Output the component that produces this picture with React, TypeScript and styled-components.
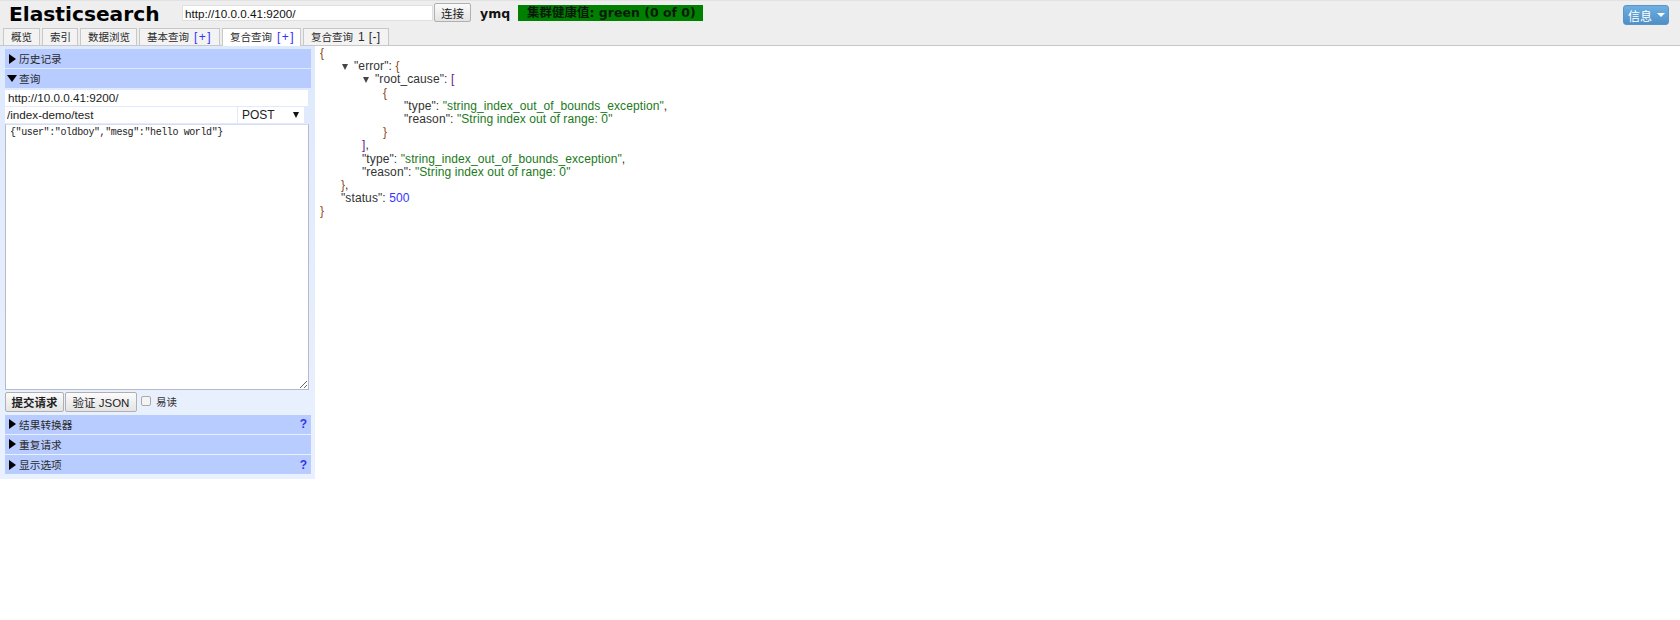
import React from "react";
import styled, { createGlobalStyle } from "styled-components";

const Global = createGlobalStyle`
  html, body { margin: 0; padding: 0; background: #fff; }
  body { font: 12px "Liberation Sans", "Noto Sans CJK SC", Arial, sans-serif; color: #222; width: 1680px; height: 620px; overflow: hidden; position: relative; }
  * { box-sizing: border-box; }
`;

const CJK = `"Liberation Sans", "Noto Sans CJK SC", sans-serif`;

const Watermark = styled.svg`
  position: absolute;
  inset: 0;
  z-index: -1;
`;
const Header = styled.header`
  height: 46px;
  background: #eeeeee;
  border-top: 1px solid #e2e2e2;
  border-bottom: 1px solid #c8c8c8;
  position: relative;
`;
const TopRow = styled.div`
  display: flex;
  align-items: flex-start;
  height: 24px;
  padding: 3px 0 0 9px;
`;
const Logo = styled.div`
  font: bold 20.2px/20px "DejaVu Sans", sans-serif;
  color: #000;
  width: 173px;
`;
const UriInput = styled.input`
  width: 251px;
  height: 16px;
  margin-top: 1px;
  border: 1px solid #e0e0e0;
  padding: 0 2px;
  font: 11.7px ${CJK};
  color: #111;
  background: #fff;
  outline: none;
`;
const Button = styled.button<{ $bold?: boolean }>`
  height: 20px;
  padding: 0;
  border: 1px solid #b0b0b0;
  border-radius: 2px;
  background: linear-gradient(#fbfbfb, #e4e4e4);
  font: ${(p) => (p.$bold ? "bold " : "")}11.5px ${CJK};
  color: #222;
  white-space: nowrap;
`;
const ConnectButton = styled(Button)`
  width: 37px;
  height: 19px;
  margin: -1px 0 0 1px;
`;
const ClusterName = styled.span`
  font: bold 12.5px/19px "DejaVu Sans", sans-serif;
  color: #111;
  margin-left: 9px;
  width: 38px;
`;
const Health = styled.div`
  width: 185px;
  height: 16px;
  margin-top: 1px;
  background: #008000;
  color: #0a1a0a;
  font: bold 12.5px/16px "DejaVu Sans", "Noto Sans CJK SC", sans-serif;
  padding-left: 9px;
  white-space: nowrap;
`;
const InfoButton = styled.button`
  position: absolute;
  top: 4px;
  right: 11px;
  width: 46px;
  height: 20px;
  border: 1px solid #5c93c8;
  border-radius: 3px;
  background: linear-gradient(#6eb0e2, #4f8fc6);
  color: #fff;
  font: 12px ${CJK};
  padding: 0 0 0 1px;
  display: flex;
  align-items: center;
  justify-content: center;
  gap: 5px;
`;
const Caret = styled.i`
  width: 0;
  height: 0;
  border-left: 4px solid transparent;
  border-right: 4px solid transparent;
  border-top: 4px solid #fff;
`;
const Tabs = styled.nav`
  display: flex;
  gap: 2px;
  padding-left: 3px;
  height: 18px;
  margin-top: 3px;
`;
const Tab = styled.div<{ $active?: boolean; $w: number }>`
  width: ${(p) => p.$w}px;
  height: ${(p) => (p.$active ? 18 : 17)}px;
  padding: 1px 0 0 7px;
  background: ${(p) => (p.$active ? "#fff" : "#f3f3f3")};
  border: 1px solid #c8c8c8;
  border-bottom: none;
  font: 10.5px/15px ${CJK};
  color: #2a2a2a;
  white-space: nowrap;
  position: relative;
  z-index: 1;
`;
const Plus = styled.span`
  color: #3333ff;
  font-size: 12px;
  letter-spacing: 1.5px;
  margin-left: 2px;
`;
const Count = styled.span`
  font-size: 12px;
  letter-spacing: 0.4px;
  margin-left: 2px;
`;
const Main = styled.main`
  display: flex;
  align-items: flex-start;
`;
const Side = styled.aside`
  width: 315px;
  height: 433px;
  padding: 3px 4px 0 5px;
  background: linear-gradient(#dfe9fd, #eaf1fe);
`;
const SectionHead = styled.div`
  height: 19px;
  margin-bottom: 1.33px;
  width: 306px;
  background: #b8ccff;
  display: flex;
  align-items: center;
  padding: 0 4px;
  font: 10.7px ${CJK};
  color: #2a2a2a;
`;
const ArrowRight = styled.i`
  width: 0;
  height: 0;
  border-top: 5px solid transparent;
  border-bottom: 5px solid transparent;
  border-left: 7px solid #000;
  margin-right: 3px;
`;
const ArrowDown = styled(ArrowRight)`
  border-left: 5px solid transparent;
  border-right: 5px solid transparent;
  border-top: 7px solid #000;
  border-bottom: none;
  margin: 0 2px 0 -2px;
`;
const Help = styled.span`
  margin-left: auto;
  color: #3333ee;
  font: bold 12px "Liberation Sans", sans-serif;
`;
const FieldInput = styled.input`
  display: block;
  height: 16px;
  width: 303px;
  border: none;
  padding: 0 3px;
  font: 11.7px ${CJK};
  color: #222;
  background: #fff;
  outline: none;
`;
const PathRow = styled.div`
  display: flex;
  margin-top: 1px;
`;
const PathInput = styled(FieldInput)`
  width: 232px;
  padding: 0 2px;
`;
const MethodBox = styled.div`
  width: 66px;
  height: 16px;
  margin-left: 1px;
  background: #fff;
  display: flex;
  align-items: center;
  justify-content: space-between;
  padding: 0 5px 0 4px;
  font: 12px ${CJK};
  color: #222;
`;
const MethodCaret = styled.i`
  width: 0;
  height: 0;
  border-left: 3.5px solid transparent;
  border-right: 3.5px solid transparent;
  border-top: 6px solid #111;
`;
const BodyArea = styled.textarea`
  display: block;
  width: 304px;
  height: 266px;
  margin: 1px 0 2.5px;
  border: 1px solid #b4bccc;
  border-top-color: #d6deee;
  padding: 1px 4px;
  font: 10px/13px "Liberation Mono", monospace;
  letter-spacing: -0.4px;
  color: #222;
  background: #fff;
  outline: none;
`;
const Actions = styled.div`
  display: flex;
  align-items: flex-start;
  height: 20px;
  margin-bottom: 2.5px;
`;
const ValidateButton = styled(Button)`
  margin-left: 1px;
  width: 72px;
`;
const SubmitButton = styled(Button)`
  width: 59px;
`;
const CheckBox = styled.i`
  width: 10px;
  height: 10px;
  margin: 4px 0 0 4px;
  border: 1px solid #aaa;
  border-radius: 2px;
  background: #f4f4f4;
`;
const CheckLabel = styled.span`
  margin: 3px 0 0 5px;
  font: 10.5px/15px ${CJK};
  color: #333;
`;
const Output = styled.pre`
  margin: 0;
  padding: 1px 0 0 5px;
  flex: 1;
  font: 12px/13.2px "Liberation Sans", "Noto Sans CJK SC", sans-serif;
  letter-spacing: 0.1px;
  color: #333;
`;
const Line = styled.div<{ $depth: number; $toggle?: boolean }>`
  height: 13.2px;
  padding-left: ${(p) => p.$depth * 21 + (p.$toggle ? 13 : 0)}px;
  position: relative;
`;
const Toggle = styled.i`
  position: absolute;
  margin-left: -12px;
  top: 4px;
  width: 0;
  height: 0;
  border-left: 3.5px solid transparent;
  border-right: 3.5px solid transparent;
  border-top: 6px solid #444;
`;
const Brace = styled.span`
  color: #8a4a1a;
`;
const Square = styled.span`
  color: #6a1a8a;
`;
const Str = styled.span`
  color: #1a7a1a;
`;
const Num = styled.span`
  color: #3333ff;
`;

function Section({ label, help }: { label: string; help?: boolean }) {
  return (
    <SectionHead>
      <ArrowRight />
      {label}
      {help && <Help>?</Help>}
    </SectionHead>
  );
}

export default function App() {
  return (
    <>
      <Global />
      <Watermark width="1680" height="620" aria-hidden="true">
        <defs>
          <pattern id="wm" x="35" y="34" width="56" height="56" patternUnits="userSpaceOnUse">
            <rect x="8" y="0" width="10" height="2" fill="#f2f8f6" />
            <rect x="0" y="7" width="2" height="2" fill="#f4f8f2" />
            <rect x="6" y="7" width="12" height="2" fill="#faf8ee" />
            <rect x="0" y="13" width="2" height="2" fill="#f4f8f2" />
            <rect x="6" y="13" width="12" height="2" fill="#f8faf6" />
          </pattern>
        </defs>
        <rect width="1680" height="620" fill="url(#wm)" />
      </Watermark>
      <Header>
        <TopRow>
          <Logo>Elasticsearch</Logo>
          <UriInput readOnly value="http://10.0.0.41:9200/" />
          <ConnectButton>连接</ConnectButton>
          <ClusterName>ymq</ClusterName>
          <Health>集群健康值: green (0 of 0)</Health>
        </TopRow>
        <InfoButton>
          信息
          <Caret />
        </InfoButton>
        <Tabs>
          <Tab $w={37}>概览</Tab>
          <Tab $w={36}>索引</Tab>
          <Tab $w={57}>数据浏览</Tab>
          <Tab $w={81}>
            基本查询 <Plus>[+]</Plus>
          </Tab>
          <Tab $active $w={79}>
            复合查询 <Plus>[+]</Plus>
          </Tab>
          <Tab $w={86}>
            复合查询 <Count>1 [-]</Count>
          </Tab>
        </Tabs>
      </Header>
      <Main>
        <Side>
          <Section label="历史记录" />
          <SectionHead>
            <ArrowDown />
            查询
          </SectionHead>
          <FieldInput readOnly value="http://10.0.0.41:9200/" />
          <PathRow>
            <PathInput readOnly value="/index-demo/test" />
            <MethodBox>
              POST
              <MethodCaret />
            </MethodBox>
          </PathRow>
          <BodyArea readOnly value={'{"user":"oldboy","mesg":"hello world"}'} />
          <Actions>
            <SubmitButton $bold>提交请求</SubmitButton>
            <ValidateButton>验证 JSON</ValidateButton>
            <CheckBox />
            <CheckLabel>易读</CheckLabel>
          </Actions>
          <Section label="结果转换器" help />
          <Section label="重复请求" />
          <Section label="显示选项" help />
        </Side>
        <Output>
          <Line $depth={0}><Brace>{"{"}</Brace></Line>
          <Line $depth={1} $toggle><Toggle />"error": <Brace>{"{"}</Brace></Line>
          <Line $depth={2} $toggle><Toggle />"root_cause": <Square>[</Square></Line>
          <Line $depth={3}><Brace>{"{"}</Brace></Line>
          <Line $depth={4}>"type": <Str>"string_index_out_of_bounds_exception"</Str>,</Line>
          <Line $depth={4}>"reason": <Str>"String index out of range: 0"</Str></Line>
          <Line $depth={3}><Brace>{"}"}</Brace></Line>
          <Line $depth={2}><Square>]</Square>,</Line>
          <Line $depth={2}>"type": <Str>"string_index_out_of_bounds_exception"</Str>,</Line>
          <Line $depth={2}>"reason": <Str>"String index out of range: 0"</Str></Line>
          <Line $depth={1}><Brace>{"}"}</Brace>,</Line>
          <Line $depth={1}>"status": <Num>500</Num></Line>
          <Line $depth={0}><Brace>{"}"}</Brace></Line>
        </Output>
      </Main>
    </>
  );
}
